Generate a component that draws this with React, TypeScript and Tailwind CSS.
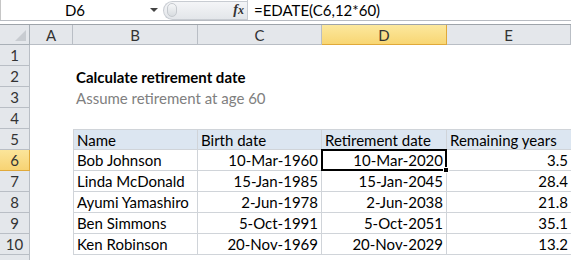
import React from "react";

const cols = ["A", "B", "C", "D", "E"];
const data = [
  ["Bob Johnson", "10-Mar-1960", "10-Mar-2020", "3.5"],
  ["Linda McDonald", "15-Jan-1985", "15-Jan-2045", "28.4"],
  ["Ayumi Yamashiro", "2-Jun-1978", "2-Jun-2038", "21.8"],
  ["Ben Simmons", "5-Oct-1991", "5-Oct-2051", "35.1"],
  ["Ken Robinson", "20-Nov-1969", "20-Nov-2029", "13.2"],
];

function RowHead({ n, sel }: { n?: number; sel?: boolean }) {
  return (
    <div
      className={
        sel
          ? "flex items-center justify-center border-r border-b border-[#e0a93a] bg-gradient-to-b from-[#fbe59a] to-[#f7d373] text-[#333]"
          : "flex items-center justify-center border-r border-b border-[#b9bec5] bg-[#e4e7eb] text-[#333]"
      }
    >
      {n}
    </div>
  );
}

export default function App() {
  const font = { fontFamily: "Lato, 'Open Sans', sans-serif" };
  return (
    <div className="w-[571px] h-[260px] overflow-hidden bg-white text-[15px] leading-[20px] text-black" style={font}>
      {/* formula bar */}
      <div className="h-[20px] flex items-center border-l border-[#c6c6c6]">
        <div className="w-[145px] text-center text-[15px] pl-[3px]">D6</div>
        <div className="w-[16px] flex justify-center">
          <div className="w-0 h-0 border-l-[4px] border-r-[4px] border-t-[4px] border-l-transparent border-r-transparent border-t-[#444]" />
        </div>
        <div className="ml-[1px] w-[84px] h-[19px] rounded-l-full bg-gradient-to-b from-[#f4f5f7] to-[#e3e6ea] border-l border-t border-b border-[#c8ccd2] flex items-center">
          <div className="ml-[3px] w-[10px] h-[14px] rounded-full bg-gradient-to-b from-[#f6f7f8] to-[#d8dce0] border border-[#c5c9ce]" />
          <div className="flex-1" />
          <span className="mr-[3px] italic font-bold text-[14px] text-[#333]" style={{ fontFamily: "'Liberation Serif', serif" }}>
            f<span className="text-[12px]">x</span>
          </span>
        </div>
        <div className="w-px h-[20px] bg-[#c8ccd2]" />
        <div className="pl-[6px]">=EDATE(C6,12*60)</div>
      </div>
      <div className="h-px bg-[#b8bcc2]" />
      <div className="h-[3px] bg-white" />
      {/* sheet */}
      <div className="grid grid-cols-[30px_43px_125px_124px_125px_1fr] grid-rows-[20px_repeat(11,21px)] border-t border-[#9ea4aa]">
        {/* header row */}
        <div className="border-r border-b border-[#a9b0b7] bg-[#e4e7eb] relative">
          <div className="absolute right-[3px] bottom-[3px] w-0 h-0" style={{ borderBottom: "11px solid #c8ccd1", borderLeft: "11px solid transparent" }} />
        </div>
        {cols.map((c) =>
          c === "D" ? (
            <div key={c} className="flex items-center justify-center border-r border-b border-[#e0a93a] bg-gradient-to-b from-[#fce89d] to-[#f8d673] text-[#333]">
              {c}
            </div>
          ) : (
            <div key={c} className="flex items-center justify-center border-r border-b border-[#b9bec5] bg-[#e4e7eb] text-[#333]">
              {c}
            </div>
          )
        )}
        {/* row 1 */}
        <RowHead n={1} />
        <div className="col-span-5" />
        {/* row 2 */}
        <RowHead n={2} />
        <div />
        <div className="col-span-4 flex items-center pl-[3px] font-bold">Calculate retirement date</div>
        {/* row 3 */}
        <RowHead n={3} />
        <div />
        <div className="col-span-4 flex items-center pl-[3px] text-[#808080]">Assume retirement at age 60</div>
        {/* row 4 */}
        <RowHead n={4} />
        <div className="col-span-5" />
        {/* row 5 */}
        <RowHead n={5} />
        <div />
        <div className="flex items-center pl-[3px] bg-[#dce6f1] border-t border-l border-r border-b border-[#d0d4d9]">Name</div>
        <div className="flex items-center pl-[3px] bg-[#dce6f1] border-t border-r border-b border-[#d0d4d9]">Birth date</div>
        <div className="flex items-center pl-[3px] bg-[#dce6f1] border-t border-r border-b border-[#d0d4d9]">Retirement date</div>
        <div className="flex items-center pl-[3px] bg-[#dce6f1] border-t border-b border-[#d0d4d9]">Remaining years</div>
        {data.map((r, i) => (
          <React.Fragment key={i}>
            <RowHead n={6 + i} sel={i === 0} />
            <div />
            <div className="flex items-center pl-[3px] border-l border-r border-b border-[#d0d4d9]">{r[0]}</div>
            <div className="flex items-center justify-end pr-[3px] border-r border-b border-[#d0d4d9]">{r[1]}</div>
            {i === 0 ? (
              <div className="relative flex items-center justify-end pr-[2px] -mt-px -ml-px h-[22px] border-2 border-black">
                {r[2]}
                <div className="absolute -right-[4px] -bottom-[4px] w-[6px] h-[6px] bg-black border border-white" />
              </div>
            ) : (
              <div className="flex items-center justify-end pr-[3px] border-r border-b border-[#d0d4d9]">{r[2]}</div>
            )}
            <div className="flex items-center justify-end pr-[3px] border-b border-[#d0d4d9]">{r[3]}</div>
          </React.Fragment>
        ))}
        <RowHead />
        <div className="col-span-5" />
      </div>
    </div>
  );
}
